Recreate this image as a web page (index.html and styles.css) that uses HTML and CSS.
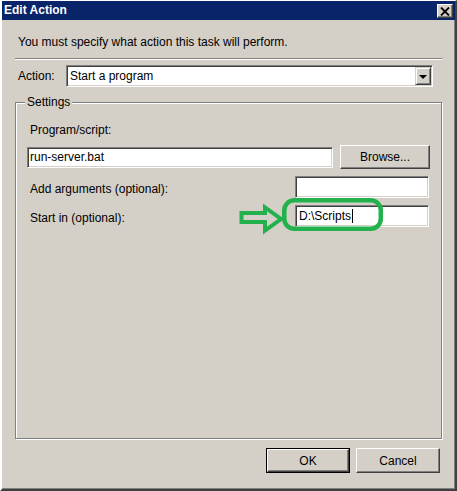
FILE: index.html
```html
<!DOCTYPE html>
<html>
<head>
<meta charset="utf-8">
<link rel="stylesheet" href="styles.css">
</head>
<body>
<div class="window">
  <div class="titlebar">
    <span class="title">Edit Action</span>
    <span class="close"><svg width="10" height="9" viewBox="0 0 10 9"><path d="M1 0.5 L9 8.5 M9 0.5 L1 8.5" stroke="#000" stroke-width="1.8" fill="none"/></svg></span>
  </div>
  <div class="body">
    <p class="intro">You must specify what action this task will perform.</p>
    <div class="sep"></div>
    <div class="action-row">
      <span class="action-label">Action:</span>
      <div class="combo">
        <span class="combo-text">Start a program</span>
        <span class="drop"><span class="tri"></span></span>
      </div>
    </div>
    <fieldset class="group">
      <legend class="legend">Settings</legend>
      <div class="lbl first">Program/script:</div>
      <div class="prog-row">
        <div class="input wide">run-server.bat</div>
        <div class="btn browse">Browse...</div>
      </div>
      <div class="field-row">
        <div class="lbl">Add arguments (optional):</div>
        <div class="input short"></div>
      </div>
      <div class="field-row">
        <div class="lbl">Start in (optional):</div>
        <div class="input short"><span class="val">D:\Scripts</span><span class="caret"></span></div>
      </div>
    </fieldset>
    <div class="buttons">
      <div class="btn default"><span class="btn-inner">OK</span></div>
      <div class="btn cancel">Cancel</div>
    </div>
  </div>
  <svg class="annot" width="453" height="488" viewBox="2 1 453 488">
    <rect x="284.3" y="200.3" width="96.5" height="28.5" rx="10" ry="10" fill="none" stroke="#22b14c" stroke-width="4.5"/>
    <polygon points="241.5,213 265,213 265,207.5 281,219 265,230.5 265,222 241.5,222" fill="none" stroke="#22b14c" stroke-width="4" stroke-linejoin="miter"/>
  </svg>
</div>
</body>
</html>
```
FILE: styles.css
```css
html, body {
  margin: 0;
  padding: 0;
  background: #d4d0c8;
}
body {
  font-family: "Liberation Sans", Arial, sans-serif;
  font-size: 12px;
  color: #000;
}
.window {
  position: relative;
  width: 457px;
  height: 491px;
  box-sizing: border-box;
  background: #d4d0c8;
  border-style: solid;
  border-width: 1px 2px 2px 2px;
  border-color: #ffffff #404040 #404040 #ffffff;
  box-shadow: inset -1px -1px 0 #808080;
}
.titlebar {
  height: 19px;
  background: #0a246a;
  display: flex;
  align-items: flex-start;
  justify-content: space-between;
}
.title {
  color: #fff;
  font-weight: bold;
  font-size: 12px;
  line-height: 19px;
  padding-left: 2px;
}
.close {
  margin-top: 3px;
  margin-right: 2px;
  width: 16px;
  height: 14px;
  box-sizing: border-box;
  background: #d4d0c8;
  border-style: solid;
  border-width: 1px;
  border-color: #fff #404040 #404040 #fff;
  box-shadow: inset -1px -1px 0 #808080;
  display: flex;
  align-items: center;
  justify-content: center;
}
.close svg { display: block; margin-left: -1px; }
.body {
  padding: 0 13px;
}
.intro {
  margin: 15px 0 0 3px;
  line-height: 14px;
  height: 14px;
}
.sep {
  margin-top: 9px;
  height: 0;
  border-top: 1px solid #808080;
  border-bottom: 1px solid #fff;
}
.action-row {
  margin-top: 5px;
  display: flex;
  align-items: center;
  height: 22px;
}
.action-label {
  width: 51px;
  padding-left: 3px;
  box-sizing: border-box;
  flex: none;
}
.combo {
  width: 367px;
  height: 22px;
  box-sizing: border-box;
  background: #fff;
  border-style: solid;
  border-width: 1px;
  border-color: #808080 #fff #fff #808080;
  box-shadow: inset 1px 1px 0 #404040, inset -1px -1px 0 #d4d0c8;
  display: flex;
  align-items: center;
  padding: 1px;
}
.combo-text {
  flex: 1;
  padding-left: 2px;
  line-height: 18px;
}
.drop {
  width: 16px;
  height: 18px;
  box-sizing: border-box;
  background: #d4d0c8;
  border-style: solid;
  border-width: 1px;
  border-color: #d4d0c8 #404040 #404040 #d4d0c8;
  box-shadow: inset 1px 1px 0 #fff, inset -1px -1px 0 #808080;
  display: flex;
  align-items: center;
  justify-content: center;
}
.tri {
  width: 0;
  height: 0;
  border-left: 4px solid transparent;
  border-right: 4px solid transparent;
  border-top: 4px solid #000;
  margin-top: 1px;
}
.group {
  margin: 8px 0 0 0;
  padding: 0 11px 0 11px;
  height: 344px;
  box-sizing: border-box;
  border: 1px solid #808080;
  box-shadow: inset 1px 1px 0 #fff, 1px 1px 0 #fff;
  min-width: 0;
}
.legend {
  padding: 0 2px;
  margin-left: -2px;
  line-height: 14px;
  background: #d4d0c8;
}
.lbl {
  padding-left: 3px;
  line-height: 14px;
  height: 14px;
}
.lbl.first {
  margin-top: 14px;
}
.prog-row {
  margin-top: 8px;
  display: flex;
  align-items: center;
  gap: 7px;
  height: 24px;
}
.input {
  height: 21px;
  box-sizing: border-box;
  background: #fff;
  border-style: solid;
  border-width: 1px;
  border-color: #808080 #fff #fff #808080;
  box-shadow: inset 1px 1px 0 #404040, inset -1px -1px 0 #d4d0c8;
  padding: 0 2px;
  line-height: 19px;
  display: flex;
  align-items: center;
}
.input.wide {
  width: 306px;
}
.input.short {
  width: 134px;
  height: 22px;
  margin-right: 1px;
  margin-left: auto;
  padding-left: 3px;
}
.field-row {
  margin-top: 7px;
  display: flex;
  align-items: flex-start;
  height: 22px;
}
.field-row .lbl {
  margin-top: 6px;
}
.caret {
  display: inline-block;
  width: 1px;
  height: 14px;
  background: #000;
  margin-left: 1px;
}
.btn {
  box-sizing: border-box;
  background: #d4d0c8;
  border-style: solid;
  border-width: 1px;
  border-color: #fff #404040 #404040 #fff;
  box-shadow: inset -1px -1px 0 #808080;
  display: flex;
  align-items: center;
  justify-content: center;
}
.browse {
  width: 90px;
  height: 24px;
}
.buttons {
  margin-top: 9px;
  margin-right: 2px;
  display: flex;
  justify-content: flex-end;
  gap: 6px;
}
.btn.cancel {
  width: 84px;
  height: 25px;
}
.btn.default {
  width: 84px;
  height: 25px;
  border: 1px solid #000;
  box-shadow: none;
  padding: 0;
}
.btn-inner {
  flex: 1;
  align-self: stretch;
  box-sizing: border-box;
  border-style: solid;
  border-width: 1px;
  border-color: #fff #404040 #404040 #fff;
  box-shadow: inset -1px -1px 0 #808080;
  display: flex;
  align-items: center;
  justify-content: center;
}
.annot {
  position: absolute;
  left: 0;
  top: 0;
  pointer-events: none;
}
```
